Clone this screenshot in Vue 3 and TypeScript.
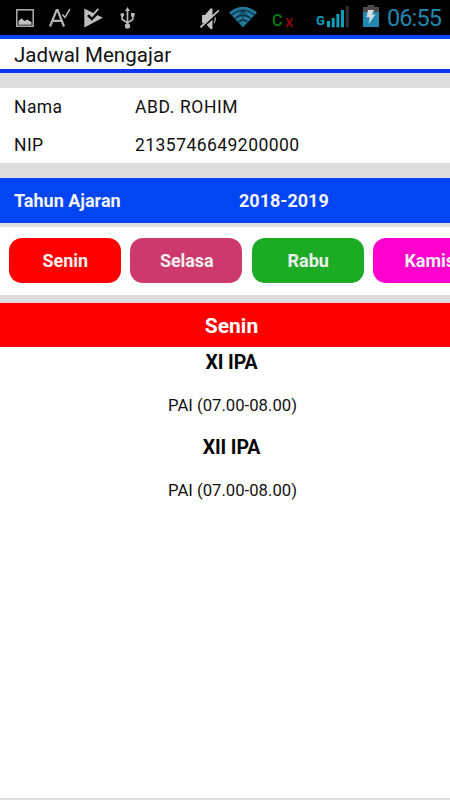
<script setup lang="ts">
interface Day { name: string; tone: string }
interface Lesson { group: string; detail: string }

const days: Day[] = [
  { name: 'Senin', tone: 'red' },
  { name: 'Selasa', tone: 'rose' },
  { name: 'Rabu', tone: 'green' },
  { name: 'Kamis', tone: 'magenta' },
]
const lessons: Lesson[] = [
  { group: 'XI IPA', detail: 'PAI (07.00-08.00)' },
  { group: 'XII IPA', detail: 'PAI (07.00-08.00)' },
]
</script>

<template>
  <div class="screen">
    <div class="status">
      <div class="left">
        <svg class="picture" width="18" height="18" viewBox="0 0 18 18">
          <rect x=".8" y=".8" width="16.4" height="16.4" fill="none" stroke="#b0b0b0" stroke-width="1.5" />
          <path d="M2.500 15.800V12l3-2.800 3 2.800 2.500-1.500 4.500 2.500v2.800z" fill="#c0c0c0" />
        </svg>
        <svg class="spell" width="22" height="20" viewBox="0 0 22 20">
          <path d="M1 18.500 7.600 2h1L15 18.500M3.700 12.800h8.800" fill="none" stroke="#b5b5b5" stroke-width="2.200" />
          <path d="M13.500 6.500 16 9.500 21 1" fill="none" stroke="#b5b5b5" stroke-width="1.500" />
        </svg>
        <svg class="play" width="19" height="20" viewBox="0 0 19 20">
          <path d="M.3.500 18.800 9.800.3 19.400z" fill="#bebebe" />
          <path d="M4 7.200 7.800 11 15.500 3.200" fill="none" stroke="#000" stroke-width="2.600" />
          <path d="M9.500 4.800 12.500 1.200 15 2.800 10.500 7z" fill="#000" />
          <path d="M5 4.500 8 7.800 14.300.8" fill="none" stroke="#bebebe" stroke-width="1.800" />
        </svg>
        <svg class="usb" width="16" height="22" viewBox="0 0 16 22">
          <path d="M7.500 3v15M2.200 8v4.500l5.300 3.300 5.300-3.300V8" fill="none" stroke="#b8b8b8" stroke-width="1.700" />
          <path d="M7.500 0 10 4H5z" fill="#b8b8b8" />
          <circle cx="7.500" cy="19" r="2.700" fill="#b8b8b8" />
          <circle cx="2.300" cy="7.800" r="1.900" fill="#b8b8b8" />
          <rect x="11" y="6" width="3.600" height="3.600" fill="#b8b8b8" />
        </svg>
      </div>
      <div class="right">
        <svg class="mute" width="20" height="22" viewBox="0 0 20 22">
          <path d="M2 7h3l5.500-6.500h2v20.500h-2L5 15H2z" fill="#c2c2c2" />
          <path d="M14 7q2.500 3.500 0 8" fill="none" stroke="#aaa" stroke-width="1.300" />
          <path d="M2 20.200 19.500 4" stroke="#000" stroke-width="1.800" />
          <path d="M.5 19.300 18.800 2.300" stroke="#c2c2c2" stroke-width="1.700" />
        </svg>
        <svg class="wifi" width="30" height="22" viewBox="0 0 30 22">
          <path d="M1 6.500Q15-5 29 6.500L15 21.500z" fill="#23779b" />
          <g fill="none" stroke="#062a3b" stroke-width="1.400">
            <path d="M3.500 9Q15-.3 26.500 9M7 12.500Q15 6 23 12.500M10.500 16Q15 12 19.500 16" />
          </g>
          <path d="M15 5v8M11.500 8.500 15 5l3.500 3.500" fill="none" stroke="#0d4159" stroke-width="1.200" />
        </svg>
        <span class="sim c">C</span>
        <span class="sim x">x</span>
        <span class="network">G</span>
        <svg class="bars" width="22" height="22" viewBox="0 0 22 22">
          <g fill="#08a0bd">
            <rect x="0" y="15" width="3" height="6.300" />
            <rect x="4.700" y="12" width="3" height="9.300" />
            <rect x="9.400" y="8" width="3" height="13.300" />
            <rect x="14" y="4" width="3" height="17.300" />
          </g>
          <rect x="18.800" y="0" width="3" height="21.300" fill="#303030" />
        </svg>
        <svg class="battery" width="16" height="22" viewBox="0 0 16 22">
          <path d="M4.500 0h7v2H16v6H0V2h4.500z" fill="#4b4b4b" />
          <rect y="7" width="16" height="15" fill="#2487ad" />
          <path d="M5 5h6L9 9.500h3.500L5.500 19l1.300-6.800H3.500z" fill="#d5dcdf" />
        </svg>
        <span class="clock">06:55</span>
      </div>
    </div>

    <header class="title"><span>Jadwal Mengajar</span></header>

    <dl class="profile">
      <div class="row"><dt>Nama</dt><dd class="name">ABD. ROHIM</dd></div>
      <div class="row"><dt>NIP</dt><dd class="nip">2135746649200000</dd></div>
    </dl>

    <div class="year"><span class="year-label">Tahun Ajaran</span><span class="year-value">2018-2019</span></div>

    <nav class="days">
      <button v-for="day in days" :key="day.name" class="day" :class="day.tone" type="button">{{ day.name }}</button>
    </nav>

    <main class="schedule">
      <h1>Senin</h1>
      <section v-for="lesson in lessons" :key="lesson.group" class="lesson">
        <h2>{{ lesson.group }}</h2>
        <p>{{ lesson.detail }}</p>
      </section>
    </main>
  </div>
</template>

<style>
body { margin: 0; overflow: hidden; }
</style>

<style scoped>
.screen { width: 450px; height: 800px; box-sizing: border-box; display: flex; flex-direction: column; overflow: hidden; background: #ddd; color: #111; font-family: Roboto, sans-serif; padding-bottom: 2px; }
.status { height: 35px; flex: none; background: #000; display: flex; justify-content: space-between; }
.left, .right { display: flex; align-items: flex-start; }
.left { padding-left: 16px; }
.right { padding-right: 8px; }
svg { display: block; flex: none; }
.picture { margin-top: 9px; }
.spell { margin: 8px 0 0 15px; }
.play { margin: 8px 0 0 13px; }
.usb { margin: 7px 0 0 17px; }
.mute { margin-top: 8px; }
.wifi { margin: 6px 0 0 8px; }
.sim { font-size: 16px; line-height: 18px; font-weight: 500; margin-top: 12px; }
.c { width: 13px; margin-left: 14px; color: #087d12; }
.x { width: 10px; color: #890707; font-size: 17px; }
.network { width: 11px; margin: 13px 0 0 21px; font-size: 13px; line-height: 16px; font-weight: 700; color: #08a0bd; }
.bars { margin-top: 6px; }
.battery { margin: 5px 0 0 14px; }
.clock { width: 55px; margin: 4px 0 0 8px; font-size: 23.500px; line-height: 29px; letter-spacing: -.9px; color: #2584aa; }
.title { height: 38px; flex: none; box-sizing: border-box; border-top: 4px solid #0344f3; border-bottom: 4px solid #0a35ef; background: #fff; padding-left: 14px; font-size: 20.500px; line-height: 32px; letter-spacing: .05px; color: #111; }
.profile { margin: 15px 0; height: 75px; flex: none; background: #fff; font-size: 17.500px; }
.row { height: 37.500px; box-sizing: border-box; display: flex; align-items: center; padding: 1px 0 0 14px; }
dt { width: 121px; letter-spacing: .4px; }
dd { margin: 0; }
.name { letter-spacing: .6px; }
.nip { letter-spacing: .45px; }
.year { height: 45px; flex: none; display: flex; align-items: center; padding-left: 14px; background: #0344f3; color: #f5f5ff; font-size: 18px; font-weight: 700; }
.year-label { width: 225px; }
.days { height: 68px; flex: none; box-sizing: border-box; margin: 4px 0 8px; display: flex; gap: 9.500px; padding: 11px 8.500px 12px; background: #fff; overflow: hidden; }
.day { width: 112px; height: 45px; flex: none; border: 0; padding: 0 0 0 1.500px; border-radius: 13px; color: #f0eeee; font: 700 18px/45px Roboto, sans-serif; }
.red { background: #f00; }
.rose { background: #cd396c; letter-spacing: -.1px; }
.green { background: #1bab25; }
.magenta { background: #f0c; }
.schedule { flex: 1; background: #fff; text-align: center; }
h1 { margin: 0; height: 44px; padding-left: 13px; background: #f00; color: #fff; font-size: 21px; line-height: 46px; font-weight: 700; }
.lesson { height: 85px; padding-left: 13px; }
h2 { margin: 0; font-size: 19.500px; line-height: 32px; font-weight: 700; color: #080808; letter-spacing: -.1px; }
p { margin: 0; padding: 12px 0 0 2px; font-size: 16.700px; line-height: 30px; }
</style>
